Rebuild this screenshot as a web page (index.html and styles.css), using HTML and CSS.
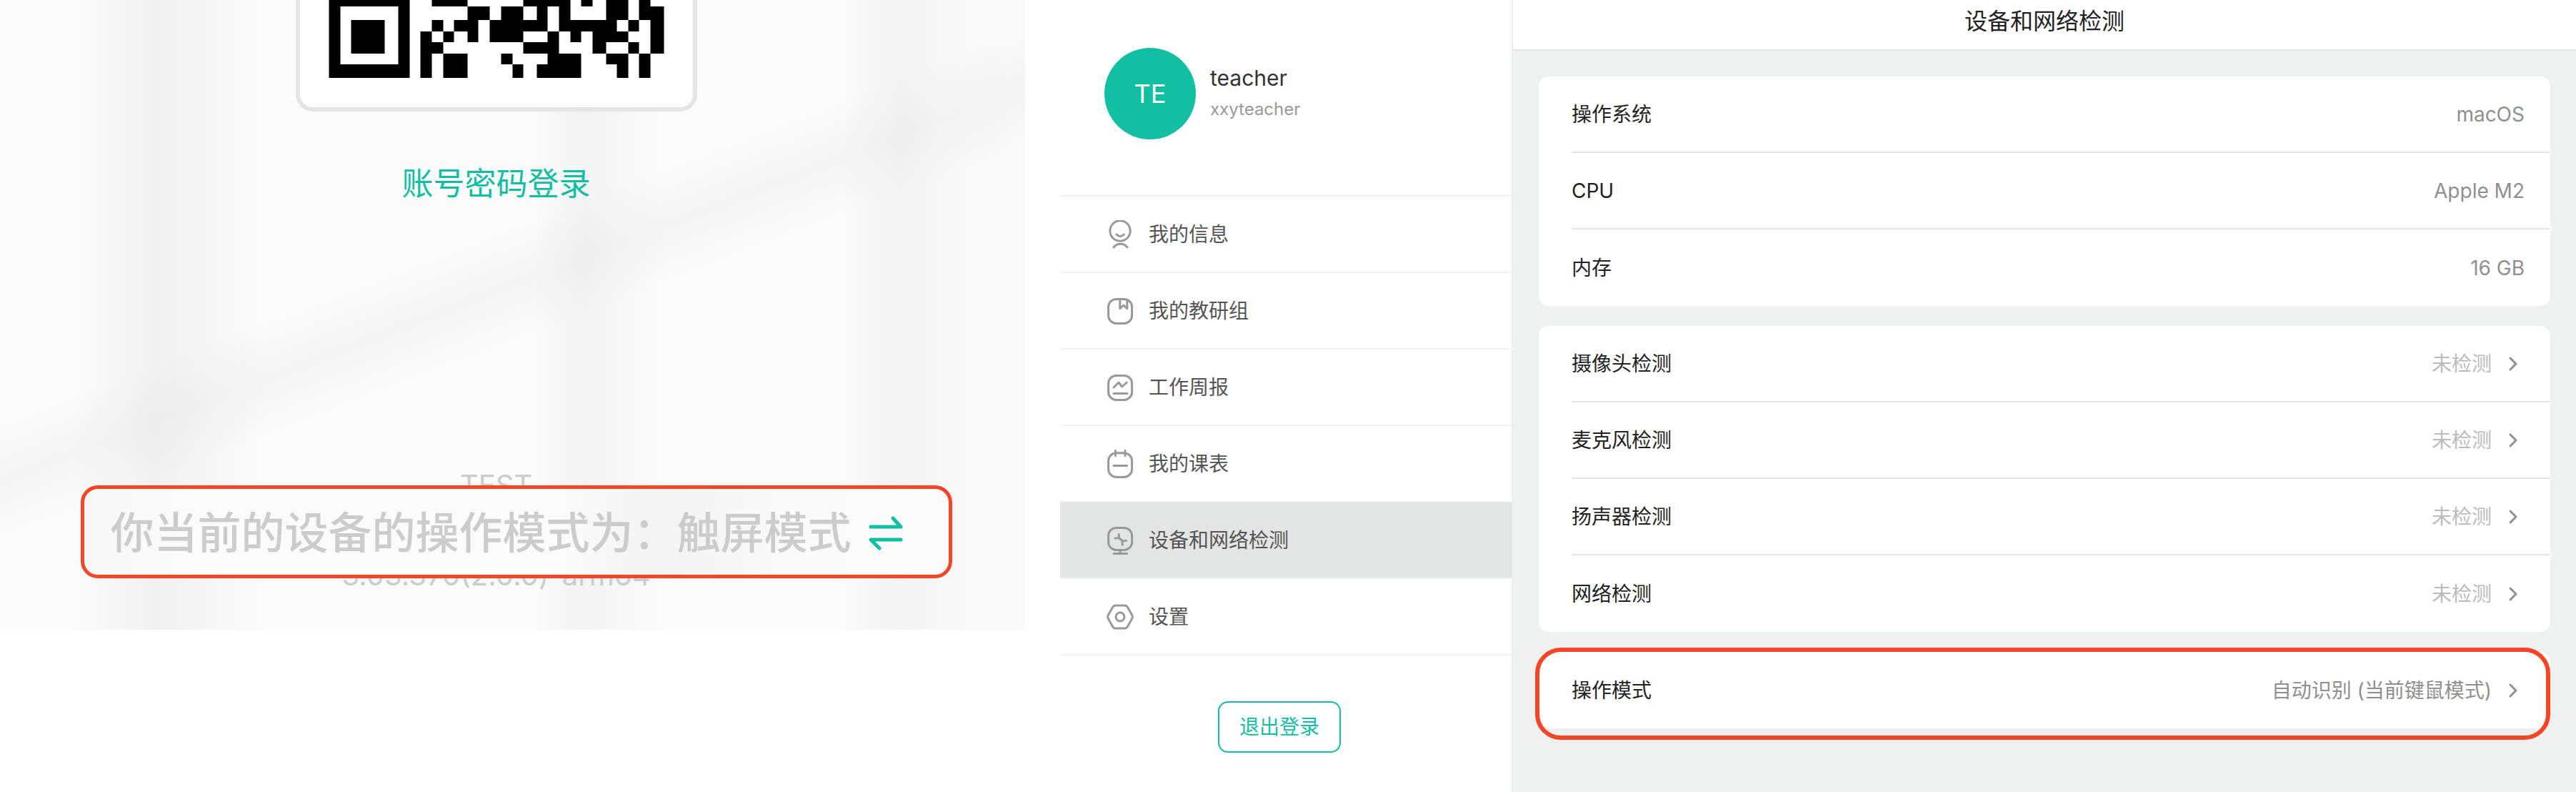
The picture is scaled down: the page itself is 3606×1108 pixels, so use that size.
FILE: index.html
```
<!DOCTYPE html>
<html lang="zh-CN">
<head>
    <meta charset="UTF-8">
    <meta name="viewport" content="width=device-width, initial-scale=1.0">
    <title>设备和网络检测</title>
    <link rel="stylesheet" href="styles.css">
</head>
<body>
    <div class="page">
        <!-- Login panel -->
        <section class="login">
            <div class="qr-card">
                <svg class="qr-code" viewBox="0 0 469 109" role="img" aria-label="二维码">
                    <path d="M0 0h113v9H0zM144 0h50v9h-50zM272 0h66v9h-66zM353 0h16v9h-16zM388 0h31v9h-31zM434 0h16v9h-16z
                        M0 9h16v81H0zM97 9h16v81H97zM31 28h47v47H31zM0 90h113v19H0z
                        M194 9h31v19h-31zM241 9h31v19h-31zM291 9h15v19h-15zM322 9h16v19h-16zM388 9h31v19h-31zM434 9h35v19h-35z
                        M144 28h16v16h-16zM175 28h34v16h-34zM225 28h81v16h-81zM322 28h81v16h-81zM419 28h15v16h-15zM450 28h19v16h-19z
                        M128 44h16v15h-16zM160 44h15v15h-15zM194 44h15v15h-15zM225 44h47v15h-47zM306 44h16v15h-16zM338 44h15v15h-15zM369 44h50v15h-50zM450 44h19v15h-19z
                        M128 59h32v16h-32zM272 59h50v16h-50zM369 59h19v16h-19zM419 59h15v16h-15zM450 59h19v16h-19z
                        M128 75h16v34h-16zM160 75h34v34h-34zM241 75h16v15h-16zM306 75h47v15h-47zM388 75h31v15h-31zM434 75h16v34h-16z
                        M257 90h15v19h-15zM291 90h62v19h-62zM403 90h16v19h-16z"/>
                </svg>
            </div>
            <a class="login-link" href="#">账号密码登录</a>
            <div class="version">
                <p>TEST</p>
                <p>3.03.370(2.0.0)-arm64</p>
            </div>
            <div class="mode-box">
                <span>你当前的设备的操作模式为：触屏模式</span>
                <button class="swap-button" type="button" aria-label="切换模式">
                    <svg viewBox="0 0 48 48">
                        <path d="M3 15h42L34 3M45 33H3l12 12"/>
                    </svg>
                </button>
            </div>
        </section>

        <!-- User menu -->
        <aside class="sidebar">
            <div class="profile">
                <div class="avatar">TE</div>
                <div>
                    <div class="profile-name">teacher</div>
                    <div class="profile-account">xxyteacher</div>
                </div>
            </div>
            <nav class="menu">
                <a class="menu-item" href="#">
                    <svg viewBox="0 0 40 40">
                        <circle cx="20" cy="15" r="14.2"/>
                        <path d="M15 20c2.8 3.2 7.6 3.2 10.4 0M11 38c4.6-6.4 14.6-6.4 19 0"/>
                    </svg>
                    我的信息
                </a>
                <a class="menu-item" href="#">
                    <svg viewBox="0 0 40 40">
                        <rect x="3.6" y="3.4" width="33" height="34" rx="11"/>
                        <path d="M19.8 4v12.6l5-4.6 5 4.6V4"/>
                    </svg>
                    我的教研组
                </a>
                <a class="menu-item" href="#">
                    <svg viewBox="0 0 40 40">
                        <rect x="3.6" y="3.4" width="33" height="34" rx="11"/>
                        <path d="M11 20l7-7 4.6 6L29.4 13M11 28.5h19"/>
                    </svg>
                    工作周报
                </a>
                <a class="menu-item" href="#">
                    <svg viewBox="0 0 40 40">
                        <rect x="3.6" y="4.8" width="33" height="33.6" rx="11"/>
                        <path d="M13.4 1.4v7.4M27 1.4v7.4M11 22.5h18.6"/>
                    </svg>
                    我的课表
                </a>
                <a class="menu-item active" href="#">
                    <svg viewBox="0 0 40 40">
                        <rect x="3.6" y="2.4" width="33" height="31" rx="11"/>
                        <path d="M20.2 34v4M11 38.5h18.6M18 11.5c1.4 3 .2 5.4-5 5.6M17.5 16l6 5M28.6 20.2c-5 .2-6.6 2.4-5.2 6"/>
                    </svg>
                    设备和网络检测
                </a>
                <a class="menu-item" href="#">
                    <svg viewBox="0 0 40 40">
                        <path d="M13.5 4h13c1.8 0 3 .8 3.8 2.3l6.5 11.5c.8 1.4.8 3 0 4.4l-6.5 11.5c-.8 1.5-2 2.3-3.8 2.3h-13c-1.8 0-3-.8-3.8-2.3L3.2 22.2c-.8-1.4-.8-3 0-4.4L9.7 6.3C10.5 4.8 11.7 4 13.5 4z"/>
                        <circle cx="20" cy="20" r="6"/>
                    </svg>
                    设置
                </a>
            </nav>
            <div class="logout">
                <button class="logout-button" type="button">退出登录</button>
            </div>
        </aside>

        <!-- Device and network check -->
        <main class="detail">
            <header class="detail-header">
                <h1>设备和网络检测</h1>
            </header>
            <div class="cards">
                <div class="card">
                    <div class="row"><span>操作系统</span><span class="value">macOS</span></div>
                    <div class="row"><span>CPU</span><span class="value">Apple M2</span></div>
                    <div class="row"><span>内存</span><span class="value">16 GB</span></div>
                </div>
                <div class="card">
                    <button class="row" type="button">
                        <span>摄像头检测</span>
                        <span class="value pending">未检测</span>
                        <svg class="chevron" viewBox="0 0 32 32"><path d="M12 8l8 8-8 8"/></svg>
                    </button>
                    <button class="row" type="button">
                        <span>麦克风检测</span>
                        <span class="value pending">未检测</span>
                        <svg class="chevron" viewBox="0 0 32 32"><path d="M12 8l8 8-8 8"/></svg>
                    </button>
                    <button class="row" type="button">
                        <span>扬声器检测</span>
                        <span class="value pending">未检测</span>
                        <svg class="chevron" viewBox="0 0 32 32"><path d="M12 8l8 8-8 8"/></svg>
                    </button>
                    <button class="row" type="button">
                        <span>网络检测</span>
                        <span class="value pending">未检测</span>
                        <svg class="chevron" viewBox="0 0 32 32"><path d="M12 8l8 8-8 8"/></svg>
                    </button>
                </div>
                <div class="card highlight">
                    <button class="row" type="button">
                        <span>操作模式</span>
                        <span class="value">自动识别 (当前键鼠模式)</span>
                        <svg class="chevron" viewBox="0 0 32 32"><path d="M12 8l8 8-8 8"/></svg>
                    </button>
                </div>
            </div>
        </main>
    </div>
</body>
</html>
```
FILE: styles.css
```
* {
    box-sizing: border-box;
}

body {
    margin: 0;
    background-color: #fff;
    color: #222;
    font-family: Inter, "Noto Sans CJK SC", sans-serif;
    font-size: 28px;
    line-height: 40px;
}

button {
    font: inherit;
    color: inherit;
    background: none;
    border: none;
    padding: 0;
    cursor: pointer;
}

a {
    text-decoration: none;
}

p {
    margin: 0;
}

svg {
    display: block;
    flex: none;
    fill: none;
    stroke-linecap: round;
    stroke-linejoin: round;
}

.page {
    display: grid;
    grid-template-columns: 1484fr 632fr 1490fr;
    min-height: 100vh;
}

/* Login panel */
.login {
    position: relative;
    display: flex;
    flex-direction: column;
    align-items: center;
    align-self: start;
    margin-right: 49px;
    padding: 0 46px 46px 0;
    background:
        linear-gradient(159deg, transparent 41%, rgba(0, 0, 0, 0.01) 44%, rgba(0, 0, 0, 0.025) 47%, rgba(0, 0, 0, 0.01) 50%, transparent 53%),
        linear-gradient(90deg,
            transparent 7%, rgba(0, 0, 0, 0.02) 12%, rgba(0, 0, 0, 0.04) 15%, rgba(0, 0, 0, 0.035) 17%, rgba(0, 0, 0, 0.015) 21%, transparent 26%,
            transparent 52%, rgba(0, 0, 0, 0.03) 57%, rgba(0, 0, 0, 0.01) 61%, transparent 65%,
            transparent 82%, rgba(0, 0, 0, 0.03) 88%, rgba(0, 0, 0, 0.01) 92%, rgba(0, 0, 0, 0.005)),
        #fbfbfb;
}

.qr-card {
    padding: 0 40px 41px;
    background-color: #fff;
    border: 6px solid #e5e5e5;
    border-top: none;
    border-radius: 0 0 24px 24px;
}

.qr-code {
    width: 470px;
    height: 109px;
    fill: #000;
}

.login-link {
    margin-top: 69px;
    color: #13bfa2;
    font-size: 44px;
    line-height: 64px;
}

.version {
    display: grid;
    gap: 66px;
    margin-top: 360px;
    color: #ccc;
    font-size: 40px;
    line-height: 60px;
    text-align: center;
}

.mode-box {
    position: absolute;
    left: 113px;
    right: 102px;
    bottom: 72px;
    display: flex;
    align-items: center;
    justify-content: center;
    gap: 24px;
    height: 130px;
    padding: 4px 28px 0 0;
    border: 5px solid #f44626;
    border-radius: 24px;
    background: linear-gradient(90deg, #f7f7f7, #fbfbfb 12%, #fbfbfb 55%, #f3f3f3 66%, #fafafa 82%, #fbfbfb);
    color: #ccc;
    font-size: 61px;
    font-weight: 500;
    line-height: 80px;
    white-space: nowrap;
}

.swap-button svg {
    width: 48px;
    height: 48px;
    stroke: #13bfa2;
    stroke-width: 5;
}

/* User menu */
.profile {
    display: flex;
    align-items: center;
    gap: 20px;
    padding: 67px 62px 78px;
}

.avatar {
    width: 128px;
    height: 128px;
    border-radius: 50%;
    background-color: #13bfa2;
    color: #fff;
    font-size: 36px;
    line-height: 128px;
    text-align: center;
}

.profile-name {
    color: #333;
    font-size: 30px;
    line-height: 44px;
}

.profile-account {
    color: #999;
    font-size: 24px;
    line-height: 44px;
}

.menu {
    border-bottom: 2px solid #f1f3f2;
}

.menu-item {
    display: flex;
    align-items: center;
    gap: 20px;
    height: 107px;
    padding-left: 64px;
    border-top: 2px solid #f1f3f2;
    color: #555;
}

.menu-item svg {
    width: 40px;
    height: 40px;
    stroke: #999;
    stroke-width: 3;
}

.menu-item.active {
    background-color: #e3e5e4;
}

.logout {
    display: flex;
    justify-content: center;
    padding: 64px 18px 48px 0;
}

.logout-button {
    padding: 14px 28px;
    border: 2px solid #13bfa2;
    border-radius: 14px;
    color: #13bfa2;
}

/* Device and network check */
.detail {
    border-left: 2px solid #eceeed;
    background-color: #eff1f0;
}

.detail-header {
    padding-bottom: 9px;
    background-color: #fff;
    border-bottom: 2px solid #e3e5e4;
}

.detail-header h1 {
    margin: 0;
    font-size: 32px;
    font-weight: 400;
    line-height: 60px;
    text-align: center;
}

.cards {
    display: grid;
    gap: 28px;
    padding: 36px;
}

.card {
    position: relative;
    padding-left: 46px;
    border-radius: 14px;
    background-color: #fff;
}

.row {
    display: flex;
    align-items: center;
    gap: 14px;
    width: 100%;
    height: 107px;
    padding-right: 36px;
    border-bottom: 2px solid #e5e5e5;
    text-align: left;
}

.row:last-child {
    border-bottom: none;
}

.value {
    margin-left: auto;
    color: #8f8f8f;
}

.pending {
    color: #bbb;
}

.chevron {
    width: 32px;
    height: 32px;
    stroke: #8f8f8f;
    stroke-width: 3;
}

/* Red frame around the mode card */
.highlight::after {
    content: "";
    position: absolute;
    inset: -6px 0 -16px -5px;
    border: 6px solid #f44626;
    border-radius: 36px;
    pointer-events: none;
}
```
